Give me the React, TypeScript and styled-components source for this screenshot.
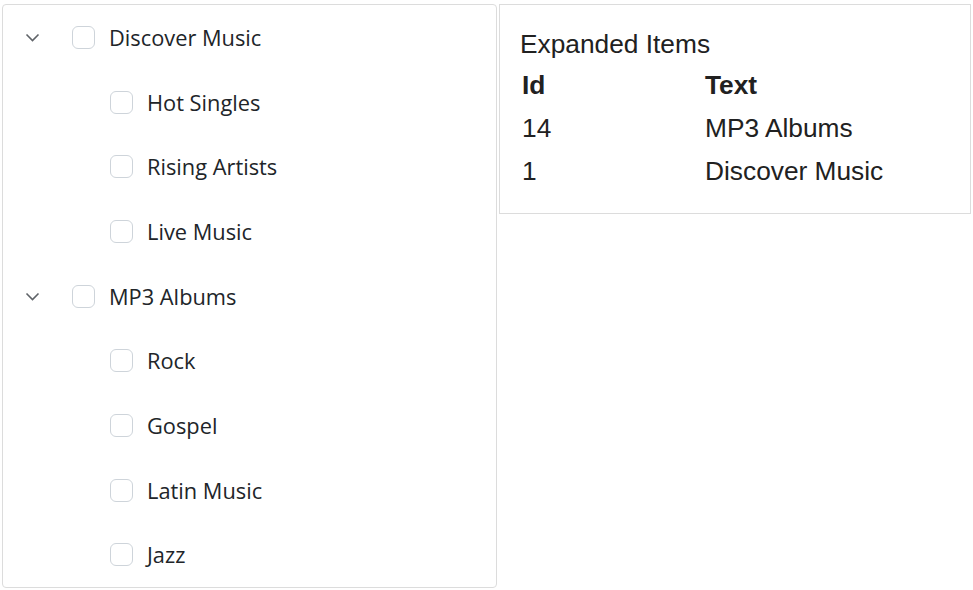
import React from "react";
import styled, { createGlobalStyle } from "styled-components";

const Global = createGlobalStyle`
  html, body { margin: 0; padding: 0; background: #fff; }
  body { font-family: "Open Sans", "Noto Sans", sans-serif; }
`;

const Page = styled.div`
  display: flex;
  align-items: flex-start;
  gap: 2px;
  padding: 4px 2px 0 2px;
`;

const TreePanel = styled.div`
  width: 495px;
  box-sizing: border-box;
  border: 1px solid #dcdcdc;
  border-radius: 4px;
  display: flex;
  flex-direction: column;
`;

const Row = styled.div<{ $level: number }>`
  height: 64.7px;
  display: flex;
  align-items: center;
  padding-left: ${(p) => 19 + p.$level * 38}px;
  color: #212529;
  font-family: "Segoe UI", "Open Sans", "Noto Sans", sans-serif;
  font-size: 21.8px;
`;

const Toggle = styled.span`
  width: 18px;
  display: flex;
  align-items: center;
  justify-content: flex-start;
  color: #5f6368;
  margin-right: 29px;
  padding-left: 3px;
`;

const Spacer = styled.span`
  width: 50px;
`;

const Check = styled.span`
  width: 23px;
  height: 23px;
  box-sizing: border-box;
  border: 1px solid #ced4da;
  border-radius: 6px;
  margin-right: 14px;
  background: #fff;
`;

const InfoPanel = styled.div`
  flex: 1;
  box-sizing: border-box;
  border: 1px solid #dcdcdc;
  padding: 24px 20px 20px 20px;
  font-family: "Liberation Sans", Arial, sans-serif;
  color: #212121;
`;

const Title = styled.div`
  font-size: 26.3px;
  line-height: 30px;
  margin-bottom: 5px;
`;

const Table = styled.div`
  display: grid;
  grid-template-columns: 183px 1fr;
  font-size: 26.3px;
`;

const Cell = styled.div<{ $head?: boolean }>`
  height: 43px;
  display: flex;
  align-items: center;
  padding-left: 2px;
  font-weight: ${(p) => (p.$head ? 700 : 400)};
`;

const Chevron = () => (
  <svg width="15" height="9" viewBox="0 0 15 9" fill="none">
    <path d="M1.5 1.5 L7.5 7.5 L13.5 1.5" stroke="currentColor" strokeWidth="1.6" />
  </svg>
);

type Item = { text: string; level: number; parent?: boolean };

const items: Item[] = [
  { text: "Discover Music", level: 0, parent: true },
  { text: "Hot Singles", level: 1 },
  { text: "Rising Artists", level: 1 },
  { text: "Live Music", level: 1 },
  { text: "MP3 Albums", level: 0, parent: true },
  { text: "Rock", level: 1 },
  { text: "Gospel", level: 1 },
  { text: "Latin Music", level: 1 },
  { text: "Jazz", level: 1 },
];

const expanded = [
  { id: 14, text: "MP3 Albums" },
  { id: 1, text: "Discover Music" },
];

export default function App() {
  return (
    <>
      <Global />
      <Page>
        <TreePanel>
          {items.map((it) => (
            <Row key={it.text} $level={it.level}>
              {it.parent ? (
                <Toggle>
                  <Chevron />
                </Toggle>
              ) : (
                <Spacer />
              )}
              <Check />
              <span>{it.text}</span>
            </Row>
          ))}
        </TreePanel>
        <InfoPanel>
          <Title>Expanded Items</Title>
          <Table>
            <Cell $head>Id</Cell>
            <Cell $head>Text</Cell>
            {expanded.map((e) => (
              <React.Fragment key={e.id}>
                <Cell>{e.id}</Cell>
                <Cell>{e.text}</Cell>
              </React.Fragment>
            ))}
          </Table>
        </InfoPanel>
      </Page>
    </>
  );
}
